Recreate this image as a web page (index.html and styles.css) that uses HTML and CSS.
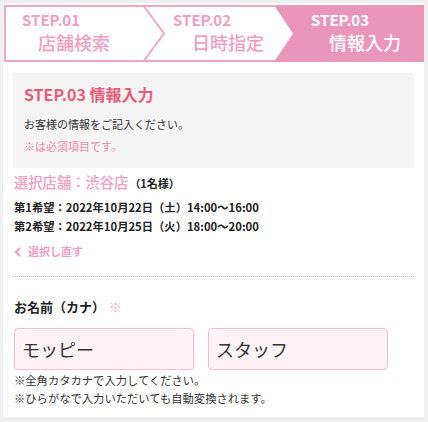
FILE: index.html
```html
<!DOCTYPE html>
<html lang="ja">
<head>
<meta charset="utf-8">
<link rel="stylesheet" href="styles.css">
</head>
<body>
<div class="card">
  <div class="steps">
    <svg class="steps-bg" viewBox="0 0 420 57" preserveAspectRatio="none">
      <polyline points="139,0 160,28.5 139,57" fill="none" stroke="#f2a6c6" stroke-width="2"/>
      <polygon points="270,0 289,28.5 270,57 420,57 420,0" fill="#ea96bb"/>
    </svg>
    <div class="step step1"><div class="step-no">STEP.01</div><div class="step-name">店舗検索</div></div>
    <div class="step step2"><div class="step-no">STEP.02</div><div class="step-name">日時指定</div></div>
    <div class="step step3 active"><div class="step-no">STEP.03</div><div class="step-name">情報入力</div></div>
  </div>
  <div class="content">
    <div class="intro">
      <div class="intro-title">STEP.03 情報入力</div>
      <div class="intro-text">お客様の情報をご記入ください。</div>
      <div class="intro-req">※は必須項目です。</div>
    </div>
    <div class="shop">選択店舗：渋谷店<span class="shop-count">（1名様）</span></div>
    <div class="hopes">
      <div>第1希望：2022年10月22日（土）14:00〜16:00</div>
      <div>第2希望：2022年10月25日（火）18:00〜20:00</div>
    </div>
    <div class="back"><svg class="back-icon" viewBox="0 0 8 10" width="8" height="10"><polyline points="6,1 2,5 6,9" fill="none" stroke="#f19ec2" stroke-width="2"/></svg>選択し直す</div>
    <div class="divider"></div>
    <div class="label">お名前（カナ）<span class="req">※</span></div>
    <div class="inputs">
      <input class="field" type="text" value="モッピー">
      <input class="field" type="text" value="スタッフ">
    </div>
    <div class="notes">
      <div>※全角カタカナで入力してください。</div>
      <div>※ひらがなで入力いただいても自動変換されます。</div>
    </div>
  </div>
</div>
</body>
</html>
```

FILE: styles.css
```css
* { box-sizing: border-box; }
html, body { margin: 0; padding: 0; }
body {
  background: #efefef;
  font-family: "Noto Sans CJK JP", "Noto Sans", sans-serif;
  color: #333;
}
.card {
  background: #fff;
  margin: 3px 4px 4px 3px;
  padding: 2px 0 10px 0;
}
.steps {
  position: relative;
  display: flex;
  height: 57px;
  margin-left: 1px;
  border: 2px solid #f2a6c6;
  border-right: none;
  color: #f19ec2;
}
.steps-bg {
  position: absolute;
  left: -2px;
  top: -2px;
  width: calc(100% + 2px);
  height: 57px;
  overflow: visible;
}
.step {
  position: relative;
  padding-top: 4px;
}
.step1 { width: 137px; padding-left: 16px; }
.step2 { width: 131px; padding-left: 30px; }
.step3 { flex: 1; padding-left: 37px; }
.step.active { color: #fff; }
.step-no {
  font-size: 15px;
  font-weight: 700;
  line-height: 18px;
}
.step-name {
  font-size: 18px;
  font-weight: 500;
  line-height: 22px;
  margin-top: 2px;
}
.step1 .step-name { padding-left: 16px; }
.step2 .step-name { padding-left: 19px; }
.step3 .step-name { padding-left: 18px; }

.content { padding: 0 10px; }
.intro {
  margin-top: 11px;
  background: #f4f4f4;
  padding: 10px 11px 13px;
}
.intro-title {
  font-size: 16px;
  font-weight: 700;
  line-height: 22px;
  color: #ea5a78;
}
.intro-text {
  margin-top: 10px;
  font-size: 11px;
  line-height: 18px;
  color: #333;
}
.intro-req {
  margin-top: 4px;
  font-size: 11px;
  line-height: 18px;
  color: #f08aa8;
}
.shop {
  margin-top: 4px;
  font-size: 14.3px;
  line-height: 20px;
  font-weight: 500;
  color: #f19ec2;
  padding-left: 1px;
}
.shop-count {
  font-size: 11px;
  font-weight: 700;
  color: #222;
  margin-left: 1px;
}
.hopes {
  margin-top: 5px;
  font-size: 11.3px;
  font-weight: 700;
  line-height: 19px;
  color: #222;
  padding-left: 1px;
}
.back {
  margin-top: 6px;
  font-size: 11px;
  font-weight: 700;
  line-height: 19px;
  color: #f19ec2;
  display: flex;
  align-items: center;
  padding-left: 1px;
}
.back-icon { margin-right: 6px; }
.divider {
  margin-top: 15px;
  height: 1px;
  background-image: repeating-linear-gradient(to right, #f0a0c4 0, #f0a0c4 1px, transparent 1px, transparent 2px);
}
.label {
  margin-top: 20px;
  font-size: 13px;
  font-weight: 700;
  line-height: 20px;
  color: #222;
  padding-left: 1px;
}
.req {
  color: #f5b3cc;
  font-weight: 400;
  margin-left: 4px;
}
.inputs {
  display: flex;
  gap: 14px;
  margin-top: 11px;
  padding-left: 1px;
}
.field {
  width: 180px;
  height: 42px;
  margin: 0;
  border: 1.5px solid #f6bcd3;
  border-radius: 4px;
  background: #fdf2f6;
  padding: 0 7px;
  font-family: "Noto Sans CJK JP", "Noto Sans", sans-serif;
  font-size: 18px;
  color: #333;
  outline: none;
}
.notes {
  margin-top: 1px;
  font-size: 11.3px;
  line-height: 18px;
  color: #333;
  padding-left: 1px;
}
```
